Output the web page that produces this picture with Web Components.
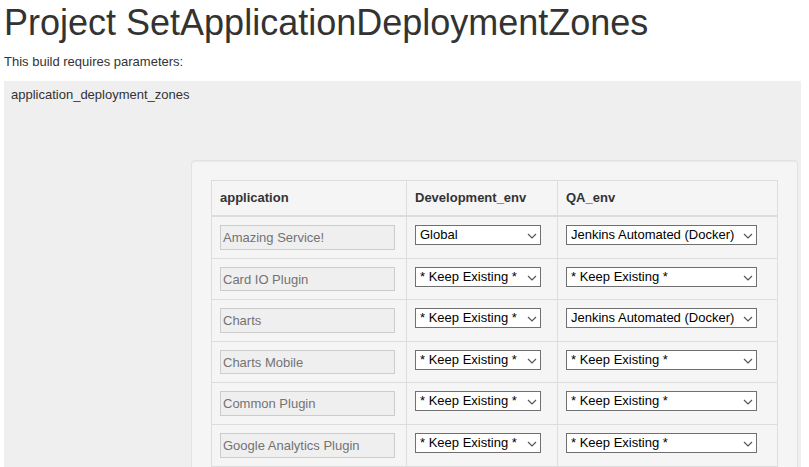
<!DOCTYPE html>
<html lang="en">
<head>
<meta charset="utf-8">
<title>Project SetApplicationDeploymentZones</title>
<style>
  body { margin: 0; background: #fff; color: #333; font: 13px/20px "Liberation Sans", Arial, sans-serif; }
</style>
</head>
<body>
<build-page>
  <span slot="title">Project SetApplicationDeploymentZones</span>
  <span slot="intro">This build requires parameters:</span>
  <build-parameter>
    <span slot="name">application_deployment_zones</span>
    <zone-table></zone-table>
  </build-parameter>
</build-page>

<script>
class BaseElement extends HTMLElement {
  constructor() {
    super();
    this.attachShadow({ mode: "open" });
  }
  render(html) { this.shadowRoot.innerHTML = html; }
}

class BuildPage extends BaseElement {
  connectedCallback() {
    this.render(`
      <style>
        :host { display: flex; flex-direction: column; box-sizing: border-box; min-height: 100vh; padding: 0 8px 0 4px; }
        h1 { margin: 3px 0 9px; font-size: 36px; line-height: 40px; font-weight: 400; }
        p { margin: 0 0 9px; }
        main { flex: 1; display: grid; }
      </style>
      <h1><slot name="title"></slot></h1>
      <p><slot name="intro"></slot></p>
      <main><slot></slot></main>`);
  }
}

class BuildParameter extends BaseElement {
  connectedCallback() {
    this.render(`
      <style>
        :host { display: flex; flex-direction: column; gap: 55px; background: #efefef; padding: 4px 3px 0 7px; }
        .panel { flex: 1; margin-left: 180px; padding: 19px 19px 0; background: #f5f5f5;
          border: 1px solid #e3e3e3; border-bottom: 0; border-radius: 4px 4px 0 0;
          box-shadow: inset 0 1px 1px rgba(0, 0, 0, .05); }
      </style>
      <div><slot name="name"></slot></div>
      <div class="panel"><slot></slot></div>`);
  }
}

class AppField extends BaseElement {
  connectedCallback() {
    this.render(`
      <style>
        :host { display: block; }
        input { display: block; box-sizing: border-box; width: 100%; height: var(--field-height, 25px);
          margin: 0; padding: 0 2px; border: 1px solid #ccc; border-radius: 0; background: #efefef;
          color: #737373; font: inherit; }
      </style>
      <input type="text" disabled aria-label="application">`);
    this.shadowRoot.querySelector("input").value = this.getAttribute("value");
  }
}

class ZoneSelect extends BaseElement {
  connectedCallback() {
    this.render(`
      <style>
        :host { display: grid; align-items: center; }
        select, svg { grid-area: 1 / 1; }
        select { appearance: none; box-sizing: border-box; width: 100%; height: 20px; margin: 0;
          padding: 0 16px 0 4px; border: 1px solid #707070; border-radius: 0; background: #fff;
          color: #000; font: inherit; line-height: 18px; }
        svg { justify-self: end; margin: 2px 4px 0 0; pointer-events: none; }
      </style>
      <select></select>
      <svg width="10" height="6" viewBox="0 0 10 6" fill="none" stroke="#555" stroke-width="1.2" aria-hidden="true"><path d="M1 1 5 5 9 1"/></svg>`);
    const select = this.shadowRoot.querySelector("select");
    select.setAttribute("aria-label", this.getAttribute("label"));
    for (const name of ["* Keep Existing *", "Global", "Jenkins Automated (Docker)"]) {
      select.add(new Option(name, name));
    }
    select.value = this.getAttribute("value");
  }
}

class ZoneTable extends BaseElement {
  connectedCallback() {
    const keep = "* Keep Existing *", docker = "Jenkins Automated (Docker)";
    const rows = [
      ["Amazing Service!", "Global", docker],
      ["Card IO Plugin", keep, keep],
      ["Charts", keep, docker],
      ["Charts Mobile", keep, keep],
      ["Common Plugin", keep, keep],
      ["Google Analytics Plugin", keep, keep]
    ];
    this.render(`
      <style>
        :host { display: block; }
        table { width: 100%; table-layout: fixed; border-collapse: separate; border-spacing: 0;
          border: solid #ddd; border-width: 1px 0 0 1px; }
        th, td { box-sizing: border-box; padding: 8px; border: solid #ddd; border-width: 0 1px 1px 0; text-align: left; }
        th { padding: 7px 8px; border-bottom-width: 2px; }
        td { vertical-align: top; }
        .app { width: 195px; }
        .dev { width: 151px; }
        td.app { padding-right: 11px; }
        td.dev { padding-right: 16px; }
        td.qa { padding-right: 20px; }
        tr:nth-child(-2n + 4) { --field-height: 24px; }
      </style>
      <table>
        <thead><tr><th class="app" scope="col">application</th><th class="dev" scope="col">Development_env</th><th scope="col">QA_env</th></tr></thead>
        <tbody>${rows.map(([app, dev, qa]) => `
          <tr>
            <td class="app"><app-field value="${app}"></app-field></td>
            <td class="dev"><zone-select label="${app}: Development_env" value="${dev}"></zone-select></td>
            <td class="qa"><zone-select label="${app}: QA_env" value="${qa}"></zone-select></td>
          </tr>`).join("")}
        </tbody>
      </table>`);
  }
}

customElements.define("build-page", BuildPage);
customElements.define("build-parameter", BuildParameter);
customElements.define("app-field", AppField);
customElements.define("zone-select", ZoneSelect);
customElements.define("zone-table", ZoneTable);
</script>
</body>
</html>
